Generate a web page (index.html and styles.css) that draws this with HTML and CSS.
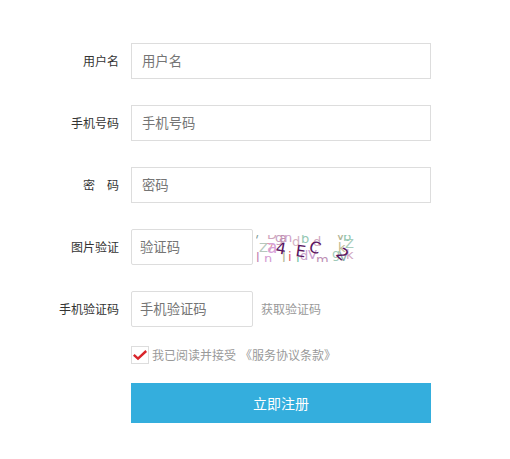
FILE: index.html
```
<!DOCTYPE html>
<html lang="zh-CN">

<head>
    <meta charset="UTF-8" />
    <title>用户注册</title>
    <link rel="stylesheet" href="styles.css">
</head>

<body>
    <form class="register">
        <div class="form-row">
            <label class="form-label" for="username">用户名</label>
            <input class="form-input" type="text" id="username" placeholder="用户名" />
        </div>
        <div class="form-row">
            <label class="form-label" for="phone">手机号码</label>
            <input class="form-input" type="text" id="phone" placeholder="手机号码" />
        </div>
        <div class="form-row">
            <label class="form-label" for="password">密　码</label>
            <input class="form-input" type="password" id="password" placeholder="密码" />
        </div>
        <div class="form-row">
            <label class="form-label" for="captcha">图片验证</label>
            <input class="form-input short" type="text" id="captcha" placeholder="验证码" />
            <svg class="captcha" width="100" height="27" viewBox="0 0 100 27">
                <g class="noise">
                    <text x="0" y="2" fill="#7f9c94">/</text>
                    <text x="11" y="4" fill="#cfa6bd">D</text>
                    <text x="19" y="7" fill="#c79fc0">g</text>
                    <text x="23" y="7" fill="#c08fb0">a</text>
                    <text x="28" y="7" fill="#cfa0c8">n</text>
                    <text x="36" y="11" fill="#d5b3c4">d</text>
                    <text x="45" y="8" fill="#95c8b4">b</text>
                    <text x="57" y="11" fill="#d0a8c0">d</text>
                    <text x="80" y="5" fill="#b3b596">V</text>
                    <text x="87" y="6" fill="#8fc7b2">b</text>
                    <text x="3" y="17" fill="#b6c8bd">Z</text>
                    <text x="10" y="17" fill="#e29aa4">7</text>
                    <text class="big" x="11" y="18" fill="#d7a0d9">a</text>
                    <text x="82" y="17" fill="#bcb991">k</text>
                    <text x="89" y="13" fill="#a9cdbb">Z</text>
                    <text x="0" y="27" fill="#c57fb0">l</text>
                    <text x="8" y="28" fill="#d49bd2">n</text>
                    <text x="26" y="26" fill="#b8bd98">J</text>
                    <text x="32" y="26" fill="#e0606c">i</text>
                    <text x="40" y="29" fill="#6fc3a5">i</text>
                    <text x="44" y="25" fill="#c9a3cb">d</text>
                    <text x="52" y="24" fill="#c99ad0">V</text>
                    <text x="60" y="29" fill="#bd8fb5">m</text>
                    <text x="76" y="23" fill="#9fc9b8">g</text>
                    <text x="83" y="26" fill="#8ea9a6">V</text>
                    <text x="90" y="24" fill="#d0a5c1">k</text>
                </g>
                <g class="code">
                    <text transform="translate(19 18) rotate(10)">4</text>
                    <text transform="translate(39 21) rotate(8)">E</text>
                    <text transform="translate(52 16) rotate(18)">C</text>
                    <text transform="translate(79 20) rotate(42)">2</text>
                </g>
            </svg>
        </div>
        <div class="form-row">
            <label class="form-label" for="smsCode">手机验证码</label>
            <input class="form-input short" type="text" id="smsCode" placeholder="手机验证码" />
            <a class="get-code">获取验证码</a>
        </div>
        <div class="agree">
            <span class="checkbox">
                <svg width="16" height="16" viewBox="0 0 16 16">
                    <path d="M1.8 7.8L6 11.6L14.2 4" fill="none" stroke="#d9252b" stroke-width="2.4" />
                </svg>
            </span>
            <span class="agree-text">我已阅读并接受</span>
            <a class="terms">《服务协议条款》</a>
        </div>
        <button class="btn-register" type="button">立即注册</button>
    </form>
</body>

</html>
```
FILE: styles.css
```
* {
    box-sizing: border-box;
    margin: 0;
    padding: 0;
    font-family: "Noto Sans CJK SC", sans-serif;
}

body {
    background-color: #fff;
    font-size: 12px;
    color: #333;
}

.register {
    width: 431px;
    padding-top: 43px;
}

.form-row {
    display: flex;
    align-items: center;
    height: 36px;
    margin-bottom: 26px;
}

.form-label {
    width: 119px;
    margin-right: 12px;
    padding-bottom: 2px;
    text-align: right;
}

.form-input {
    width: 300px;
    height: 36px;
    padding: 0 10px 2px;
    border: 1px solid #ddd;
    outline: none;
    font-size: 13.33px;
}

.form-input::placeholder {
    color: #757575;
}

.form-input.short {
    width: 122px;
    padding: 0 8px 2px;
    border-radius: 2px;
}

.captcha {
    margin-left: 3px;
    margin-top: 2px;
    overflow: hidden;
}

.noise text {
    font-family: "DejaVu Sans", sans-serif;
    font-size: 13px;
}

.noise .big {
    font-size: 17px;
}

.code text {
    font-family: "DejaVu Sans", sans-serif;
    font-size: 16px;
    fill: #5a1560;
}

.get-code {
    margin-left: 8px;
    padding-bottom: 2px;
    color: #999;
}

.agree {
    display: flex;
    align-items: center;
    height: 18px;
    margin: -7px 0 19px 131px;
    color: #999;
}

.checkbox {
    width: 18px;
    height: 18px;
    margin-right: 3px;
    border: 1px solid #ddd;
}

.checkbox svg {
    display: block;
}

.agree-text,
.terms {
    padding-bottom: 2px;
}

.terms {
    margin-left: 4px;
}

.btn-register {
    display: block;
    width: 300px;
    height: 40px;
    margin-left: 131px;
    border: none;
    background-color: #34aedd;
    color: #fff;
    font-size: 14px;
    cursor: pointer;
}
```
